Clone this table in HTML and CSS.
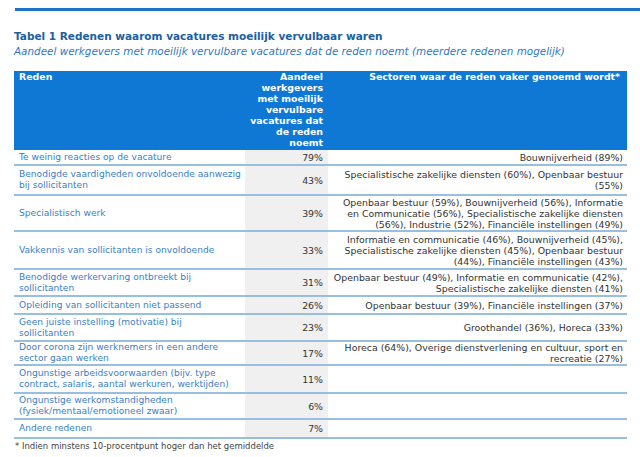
FILE: index.html
```html
<!DOCTYPE html>
<html lang="nl">
<head>
<meta charset="utf-8">
<link rel="stylesheet" href="styles.css">
</head>
<body>
<div class="page">
  <div class="topline"></div>
  <h1 class="title">Tabel 1 Redenen waarom vacatures moeilijk vervulbaar waren</h1>
  <p class="subtitle">Aandeel werkgevers met moeilijk vervulbare vacatures dat de reden noemt (meerdere redenen mogelijk)</p>
  <table class="tbl">
    <colgroup>
      <col class="w1">
      <col class="w2">
      <col class="w3">
    </colgroup>
    <thead>
      <tr class="hrow">
        <th class="c1">Reden</th>
        <th class="c2">Aandeel werkgevers met moeilijk vervulbare vacatures dat de reden noemt</th>
        <th class="c3">Sectoren waar de reden vaker genoemd wordt*</th>
      </tr>
    </thead>
    <tbody>
      <tr class="r1"><td class="c1">Te weinig reacties op de vacature</td><td class="c2">79%</td><td class="c3">Bouwnijverheid (89%)</td></tr>
      <tr class="r2"><td class="c1">Benodigde vaardigheden onvoldoende aanwezig bij sollicitanten</td><td class="c2">43%</td><td class="c3">Specialistische zakelijke diensten (60%), Openbaar bestuur (55%)</td></tr>
      <tr class="r3"><td class="c1">Specialistisch werk</td><td class="c2">39%</td><td class="c3">Openbaar bestuur (59%), Bouwnijverheid (56%), Informatie en Communicatie (56%), Specialistische zakelijke diensten (56%), Industrie (52%), Financiële instellingen (49%)</td></tr>
      <tr class="r4"><td class="c1">Vakkennis van sollicitanten is onvoldoende</td><td class="c2">33%</td><td class="c3">Informatie en communicatie (46%), Bouwnijverheid (45%), Specialistische zakelijke diensten (45%), Openbaar bestuur (44%), Financiële instellingen (43%)</td></tr>
      <tr class="r5"><td class="c1">Benodigde werkervaring ontbreekt bij sollicitanten</td><td class="c2">31%</td><td class="c3">Openbaar bestuur (49%), Informatie en communicatie (42%), Specialistische zakelijke diensten (41%)</td></tr>
      <tr class="r6"><td class="c1">Opleiding van sollicitanten niet passend</td><td class="c2">26%</td><td class="c3">Openbaar bestuur (39%), Financiële instellingen (37%)</td></tr>
      <tr class="r7"><td class="c1">Geen juiste instelling (motivatie) bij<br>sollicitanten</td><td class="c2">23%</td><td class="c3">Groothandel (36%), Horeca (33%)</td></tr>
      <tr class="r8"><td class="c1">Door corona zijn werknemers in een andere sector gaan werken</td><td class="c2">17%</td><td class="c3">Horeca (64%), Overige dienstverlening en cultuur, sport en recreatie (27%)</td></tr>
      <tr class="r9"><td class="c1">Ongunstige arbeidsvoorwaarden (bijv. type contract, salaris, aantal werkuren, werktijden)</td><td class="c2">11%</td><td class="c3"></td></tr>
      <tr class="r10"><td class="c1">Ongunstige werkomstandigheden (fysiek/mentaal/emotioneel zwaar)</td><td class="c2">6%</td><td class="c3"></td></tr>
      <tr class="r11"><td class="c1">Andere redenen</td><td class="c2">7%</td><td class="c3"></td></tr>
    </tbody>
  </table>
  <p class="note">* Indien minstens 10-procentpunt hoger dan het gemiddelde</p>
</div>
</body>
</html>
```

FILE: styles.css
```css
html, body {
  margin: 0;
  padding: 0;
  background: #ffffff;
}
body {
  font-family: "DejaVu Sans", Verdana, sans-serif;
  width: 640px;
  height: 457px;
  overflow: hidden;
}
.page {
  padding: 8px 0 0 14px;
}
.topline {
  height: 3px;
  background: #1d74c6;
  margin-left: 1px;
}
.title {
  margin: 18px 0 0 0;
  font-size: 10.5px;
  line-height: 14px;
  font-weight: bold;
  color: #20609f;
}
.subtitle {
  margin: 1px 0 0 0;
  font-size: 10.4px;
  line-height: 14px;
  font-style: italic;
  color: #2f78bd;
}
.tbl {
  margin-top: 13px;
  width: 613px;
  border-collapse: collapse;
  table-layout: fixed;
  font-size: 9.4px;
  line-height: 11px;
}
.w1 { width: 231px; }
.w2 { width: 83px; }
.w3 { width: 299px; }
.tbl th, .tbl td {
  vertical-align: middle;
}
.tbl .c1 { text-align: left; padding: 0 0 0 5px; }
.tbl .c2 { text-align: right; padding: 0 5px 0 3px; }
.tbl .c3 { text-align: right; padding: 0 4px 0 4px; }
.hrow th {
  background: #0f78d4;
  color: #ffffff;
  font-weight: bold;
  vertical-align: top;
  height: 79px;
  padding-top: 1px;
  padding-bottom: 0;
  box-sizing: border-box;
}
.hrow th.c3 { padding-right: 7px; }
tbody td {
  border-bottom: 2px solid #98bfdf;
  color: #333333;
}
tbody td.c1 { color: #3b80c2; font-size: 9.1px; }
tbody td.c2 { background: #f0f0f0; }
.r1 td { height: 14px; }
.r2 td { height: 28px; }
.r3 td { height: 34px; }
.r4 td { height: 36px; }
.r5 td { height: 25px; }
.r6 td { height: 16px; }
.r7 td { height: 25px; }
.r8 td { height: 21px; }
.r9 td { height: 26px; }
.r10 td { height: 24px; }
.r11 td { height: 17px; }
.note {
  margin: 1px 0 0 1px;
  font-size: 8.5px;
  line-height: 12px;
  color: #444444;
}
```
